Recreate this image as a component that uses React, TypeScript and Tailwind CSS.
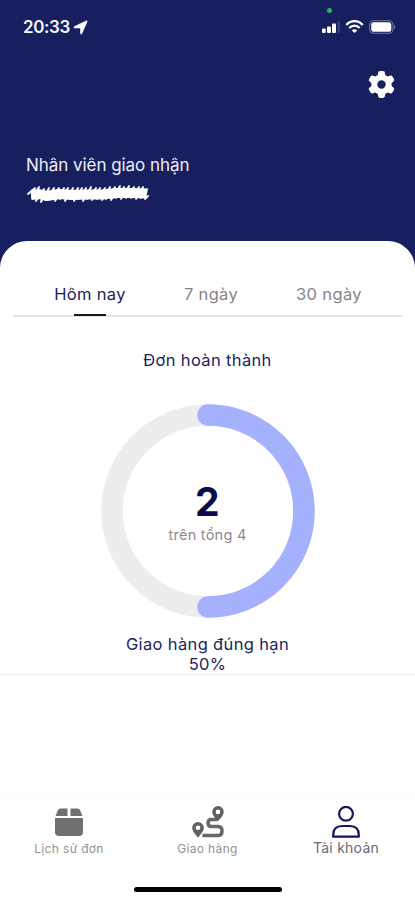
import React from "react";
import { FaGear } from "react-icons/fa6";

function StatusBar() {
  return (
    <div className="relative flex h-[54px] items-center justify-between pl-[23px] pr-[19px] text-white">
      <div className="flex items-center gap-[3px]">
        <span className="text-[17px] font-semibold leading-none tracking-[-0.4px] text-[#f4f4fa]">20:33</span>
        <svg width="15" height="15" viewBox="0 0 15 15" fill="white" stroke="white" strokeWidth=".6">
          <path d="M13.200.900Q14.500.500 14.100 1.800L8.800 13.600Q8 14.900 7.500 13.500V8H1.500Q.100 7.500 1.400 6.600Z" />
        </svg>
      </div>
      <span className="absolute left-[327px] top-[8px] size-[5px] rounded-full bg-[#27b563]" />
      <div className="flex items-center">
        <svg width="18" height="12" viewBox="0 0 18 12" fill="white">
          <rect x="0" y="7.5" width="3.7" height="4.5" rx="1" />
          <rect x="5" y="5.5" width="3.9" height="6.5" rx="1" />
          <rect x="10" y="2.5" width="4" height="9.5" rx="1" />
          <rect x="15.500" y="0" width="2.500" height="12" rx="1" fillOpacity="0.15" />
        </svg>
        <svg className="ml-[5px]" width="19" height="14" viewBox="0 0 19 14" fill="none" stroke="white" strokeWidth="2.3">
          <path d="M1.3 5C6-.1 13-.1 17.700 5" />
          <path d="M4.300 8C7.200 4.900 11.800 4.900 14.700 8" />
          <path d="M6.800 10.400C8.400 8.900 10.600 8.900 12.200 10.400L9.500 13Z" fill="white" stroke="none" />
        </svg>
        <svg className="ml-[5px]" width="27" height="14" viewBox="0 0 27 14">
          <rect x=".7" y=".7" width="23.300" height="12.600" rx="4" fill="none" stroke="white" strokeOpacity=".4" strokeWidth="1.100" />
          <rect x="2.300" y="2.200" width="20" height="9.600" rx="2.300" fill="white" />
          <path d="M25.200 4.700Q27.300 7 25.200 9.300Z" fill="white" fillOpacity=".5" />
        </svg>
      </div>
    </div>
  );
}

function HiddenName() {
  return (
    <svg className="mt-[8px] ml-[1px]" width="125" height="20" viewBox="0 0 125 20" fill="none" stroke="white" strokeLinecap="round" strokeLinejoin="round">
      <path strokeWidth="1.800" d="M1 10L8 4L5 14L12 3L9 17L17 5L14 18L22 4L18 16L27 4L23 15L32 4L28 17L37 4L33 15L41 4L38 17L46 4L43 15L51 4L47 17L55 4L52 15L59 4L56 17L64 3L60 15L69 4L65 16L73 4L70 15L78 4L75 16L83 3L79 15L88 3L84 16L93 2L89 14L97 3L94 15L102 2L99 14L107 3L104 14L112 3L109 15L116 3L114 14L120 5L118 15L121 12" />
      <path strokeWidth="10" strokeLinecap="butt" d="M4 11L12 10L20 12L32 10L45 11L60 10.500L75 10.500L90 9L103 9L119 9.500" />
    </svg>
  );
}

function Donut() {
  return (
    <div className="mx-auto grid size-[214px] place-items-center">
      <svg className="col-start-1 row-start-1" width="214" height="214" viewBox="0 0 214 214" fill="none" strokeWidth="21.500">
        <circle cx="107" cy="107" r="96" stroke="#eceeee" />
        <path d="M107 11A96 96 0 0 1 107 203" stroke="#a5b1fd" strokeLinecap="round" />
      </svg>
      <div className="col-start-1 row-start-1 flex flex-col items-center pt-[3px]">
        <span className="text-[39px] font-bold leading-[44px] text-[#0b0a4c]">2</span>
        <span className="pt-px text-[14.5px] leading-[20px] tracking-[0.25px] text-[#8c8c8c]">trên tổng 4</span>
      </div>
    </div>
  );
}

function PackageIcon() {
  return (
    <svg width="28" height="28" viewBox="0 0 28 28" fill="#707072">
      <path d="M5.500.500H12.500V8H.500L3 2Q3.600.500 5.500.500ZM15.500.500H22.500Q24.400.500 25 2L27.500 8H15.500Z" />
      <path d="M0 10H28V24Q28 28 24 28H4Q0 28 0 24Z" />
    </svg>
  );
}

function DeliveryIcon() {
  return (
    <svg width="32" height="32" viewBox="0 0 32 32" fill="none">
      <path d="M26 13.500H19.500Q16 13.500 16 17T19.500 20.500H26.500Q30 20.500 30 25T26.500 29.500H10.500" stroke="#68686b" strokeWidth="3.500" />
      <path fill="#606063" fillRule="evenodd" d="M26 0A5.700 5.700 0 0 0 20.300 5.700C20.300 9 23.500 12.500 26 15C28.500 12.500 31.700 9 31.700 5.700A5.700 5.700 0 0 0 26 0ZM26 3.600A2.300 2.300 0 1 1 26 8.200A2.300 2.300 0 0 1 26 3.600Z" />
      <path fill="#606063" fillRule="evenodd" d="M6 16A5.800 5.800 0 0 0 .200 21.700C.200 25 3.500 28.500 6 31.500C8.500 28.500 11.800 25 11.800 21.700A5.800 5.800 0 0 0 6 16ZM6 19.500A2.300 2.300 0 1 1 6 24.100A2.300 2.300 0 0 1 6 19.500Z" />
    </svg>
  );
}

function AccountIcon() {
  return (
    <svg width="28" height="32" viewBox="0 0 28 32" fill="none" stroke="#17155b" strokeWidth="2.200" strokeLinejoin="round">
      <circle cx="14" cy="7.800" r="6.900" />
      <path d="M1.200 30.700V29C1.200 23 4.500 20 10 20H18C23.500 20 26.800 23 26.800 29V30.700Z" />
    </svg>
  );
}

export default function App() {
  return (
    <div className="flex h-[900px] w-[415px] flex-col overflow-hidden bg-[#171f5e] font-['Inter','Liberation_Sans',sans-serif]">
      <header className="h-[241px] shrink-0">
        <StatusBar />
        <div className="flex justify-end pr-[20px] pt-[17px] text-white">
          <FaGear className="size-[27px]" />
        </div>
        <div className="pl-[26px] pt-[56px] text-white">
          <p className="text-[17px] leading-[22px] tracking-[-0.05px] text-[#eeeef5]">Nhân viên giao nhận</p>
          <HiddenName />
        </div>
      </header>

      <main className="flex flex-1 flex-col rounded-t-[27px] bg-white">
        <nav className="mx-[13px] flex h-[76px] items-end border-b-2 border-[#e4e4e5] pl-[12px] text-[16.5px] leading-[22px] tracking-[0.35px] text-[#858585]">
          <button className="relative h-[32px] w-[130px] pb-[10px] text-[#201e5d]">
            Hôm nay
            <span className="absolute -bottom-px left-[49px] h-[2px] w-[32px] bg-[#161b22]" />
          </button>
          <button className="h-[32px] w-[112px] pb-[10px]">7 ngày</button>
          <button className="h-[32px] w-[124px] pb-[10px]">30 ngày</button>
        </nav>

        <section className="h-[358px] border-b border-[#ededee] pt-[32px] text-center text-[16.5px] tracking-[0.35px] text-[#201e5d]">
          <h1 className="leading-[22px]">Đơn hoàn thành</h1>
          <div className="pt-[33px]"><Donut /></div>
          <p className="pt-[16px] leading-[20px]">Giao hàng đúng hạn</p>
          <p className="leading-[20px]">50%</p>
        </section>

        <div className="flex-1" />
        <footer className="h-[102px] border-t border-[#fafafa]">
          <div className="flex h-[84px] text-[12px] leading-[16px] tracking-[0.35px] text-[#929292]">
            <button className="flex w-[138px] flex-col items-center gap-[5px] pt-[9px]">
              <PackageIcon />
              <span>Lịch sử đơn</span>
            </button>
            <button className="flex w-[139px] flex-col items-center gap-[3px] pt-[7px]">
              <DeliveryIcon />
              <span>Giao hàng</span>
            </button>
            <button className="flex w-[138px] flex-col items-center gap-[2px] pt-[7px] text-[14px] tracking-[0.25px] text-[#696978]">
              <AccountIcon />
              <span>Tài khoản</span>
            </button>
          </div>
          <div className="mx-auto mt-[4px] h-[5px] w-[148px] rounded-full bg-black" />
        </footer>
      </main>
    </div>
  );
}
